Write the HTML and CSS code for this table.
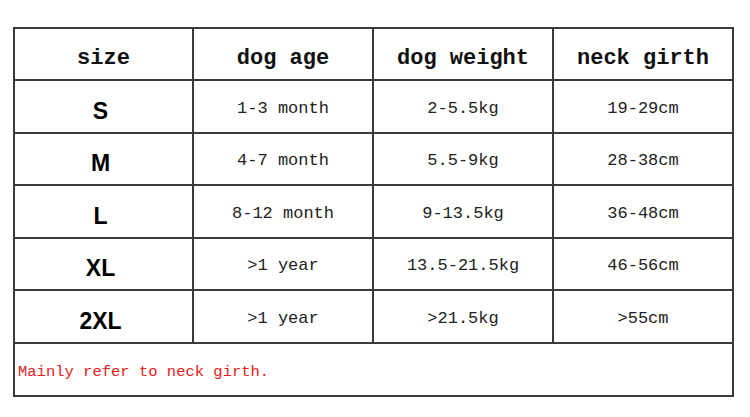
FILE: index.html
```html
<!DOCTYPE html>
<html>
<head>
<meta charset="utf-8">
<link rel="stylesheet" href="styles.css">
</head>
<body>
<div class="page">
<table class="chart">
<colgroup><col class="c1"><col class="c2"><col class="c3"><col class="c4"></colgroup>
<thead>
<tr class="hd"><th>size</th><th>dog age</th><th>dog weight</th><th>neck girth</th></tr>
</thead>
<tbody>
<tr><td class="sz">S</td><td>1-3 month</td><td>2-5.5kg</td><td>19-29cm</td></tr>
<tr><td class="sz">M</td><td>4-7 month</td><td>5.5-9kg</td><td>28-38cm</td></tr>
<tr><td class="sz">L</td><td>8-12 month</td><td>9-13.5kg</td><td>36-48cm</td></tr>
<tr><td class="sz">XL</td><td>&gt;1 year</td><td>13.5-21.5kg</td><td>46-56cm</td></tr>
<tr><td class="sz">2XL</td><td>&gt;1 year</td><td>&gt;21.5kg</td><td>&gt;55cm</td></tr>
<tr class="nt"><td class="note" colspan="4">Mainly refer to neck girth.</td></tr>
</tbody>
</table>
</div>
</body>
</html>
```
FILE: styles.css
```css
html, body { margin: 0; padding: 0; background: #fff; }
.page { padding: 27px 0 0 13px; }
.chart {
  border-collapse: collapse;
  table-layout: fixed;
  width: 719px;
}
.c1 { width: 179px; }
.c2, .c3, .c4 { width: 180px; }
.chart tr { height: 52.5px; }
.chart tr.hd { height: 52px; }
.chart tr.nt { height: 53px; }
.chart th, .chart td {
  border: 2px solid #3a3a3a;
  padding: 0;
  text-align: center;
  vertical-align: middle;
  line-height: 20px;
  font-family: "Liberation Mono", "DejaVu Sans Mono", monospace;
}
.chart th {
  font-size: 22px;
  font-weight: bold;
  color: #111;
  padding-top: 10px;
}
.chart td {
  font-size: 17px;
  color: #222;
  padding-top: 5px;
}
.chart td.sz {
  font-family: "Liberation Sans", Arial, sans-serif;
  font-size: 23px;
  font-weight: bold;
  color: #000;
  padding-top: 9px;
  padding-right: 6px;
}
.chart td.note {
  text-align: left;
  color: #e32222;
  font-size: 15.5px;
  padding-left: 3px;
  padding-top: 5px;
}
```
